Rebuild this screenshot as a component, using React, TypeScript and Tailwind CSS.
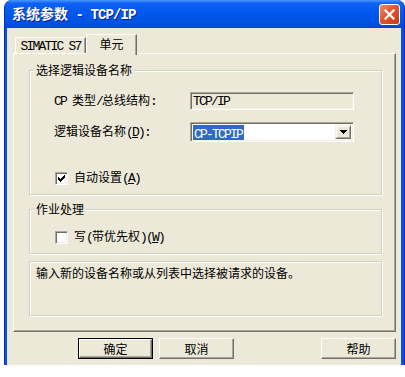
import React from "react";

const L = ({ children }: { children: React.ReactNode }) => (
  <span className="font-['Liberation_Mono'] text-[13px] tracking-[-1.8px]">{children}</span>
);
const U = ({ children }: { children: React.ReactNode }) => (
  <span className="font-['Liberation_Mono'] text-[13px] tracking-[-1.8px] underline">{children}</span>
);

function Etched({
  className = "",
  label,
  children,
}: {
  className?: string;
  label?: string;
  children?: React.ReactNode;
}) {
  return (
    <div
      className={`relative border border-[#D0D0BF] shadow-[1px_1px_0_#FFFFFF,inset_1px_1px_0_#FFFFFF] ${className}`}
    >
      {label && (
        <span className="absolute left-[4px] top-[-8px] bg-[#ECE9D8] px-[2px] leading-[14px]">
          {label}
        </span>
      )}
      {children}
    </div>
  );
}

function Check({ checked }: { checked?: boolean }) {
  return (
    <div className="w-[13px] h-[13px] shrink-0 bg-white border border-t-[#ACA899] border-l-[#ACA899] border-r-white border-b-white shadow-[inset_1px_1px_0_#716F64,inset_-1px_-1px_0_#F1EFE2] flex items-center justify-center">
      {checked && (
        <svg width="7" height="7" viewBox="0 0 7 7" shapeRendering="crispEdges">
          <polygon points="0,2 2,4 7,-1 7,2 2,7 0,5" fill="#000" />
        </svg>
      )}
    </div>
  );
}

function Btn({ children, def }: { children: React.ReactNode; def?: boolean }) {
  const inner =
    "w-full h-full flex items-center justify-center border border-t-white border-l-white border-r-[#716F64] border-b-[#716F64] shadow-[inset_-1px_-1px_0_#ACA899]";
  return (
    <div className={`w-[75px] h-[21px] shrink-0 ${def ? "border border-black" : ""}`}>
      <div className={inner}>
        <span className="leading-[14px] text-[12px]">{children}</span>
      </div>
    </div>
  );
}

const sunken =
  "border border-t-[#ACA899] border-l-[#ACA899] border-r-white border-b-white shadow-[inset_1px_1px_0_#716F64,inset_-1px_-1px_0_#F1EFE2]";

export default function App() {
  return (
    <div className="w-[405px] h-[377px] bg-white font-['Noto_Sans_CJK_SC',sans-serif] text-[12px] text-black">
      <div className="ml-[4px] w-[401px] h-[365px] flex flex-col rounded-t-[8px] overflow-hidden bg-[#0A4FE0] border-l border-r border-[#0831B5]">
        {/* Title bar */}
        <div className="h-[28px] shrink-0 flex items-center bg-[linear-gradient(to_bottom,#4A96FF_0%,#0F62F5_12%,#0058EE_45%,#0054E3_80%,#0046D2_100%)]">
          <div className="pl-[7px] flex-1 text-white font-bold text-[14px] leading-[16px] [text-shadow:1px_1px_0_#0A1E8A] whitespace-pre">
            系统参数<span className="font-['Liberation_Mono'] text-[14px] tracking-[-0.9px]"> - TCP/IP</span>
          </div>
          <div className="mr-[4px] w-[21px] h-[21px] rounded-[3px] border border-white bg-[linear-gradient(135deg,#F08A6A_0%,#E0572F_45%,#C73A17_100%)] flex items-center justify-center">
            <svg width="11" height="11" viewBox="0 0 11 11">
              <path d="M1.5 1.5 L9.5 9.5 M9.5 1.5 L1.5 9.5" stroke="#fff" strokeWidth="2.2" strokeLinecap="square" />
            </svg>
          </div>
        </div>

        {/* Body */}
        <div className="flex-1 ml-[2px] mr-[3px] bg-[#ECE9D8] flex flex-col pt-[6px]">
          {/* Tabs */}
          <div className="flex items-end h-[21px] pl-[8px] relative z-10">
            <div className="w-[71px] h-[16px] mb-[2px] border-t border-l border-white border-r border-r-[#716F64] shadow-[inset_-1px_0_0_#ACA899] rounded-tl-[2px] flex items-center justify-center">
              <span className="leading-[14px]">
                <L>SIMATIC S7</L>
              </span>
            </div>
            <div className="w-[51px] h-[21px] bg-[#ECE9D8] border-t border-l border-white border-r border-r-[#716F64] shadow-[inset_-1px_0_0_#ACA899] rounded-tl-[2px] flex justify-center pt-[2px]">
              <span className="leading-[14px] text-[12px]">单元</span>
            </div>
          </div>

          {/* Panel */}
          <div className="-mt-[2px] ml-[6px] w-[383px] h-[279px] border-t border-l border-white border-r border-b border-r-[#716F64] border-b-[#716F64] shadow-[inset_-1px_-1px_0_#ACA899] pt-[16px] pl-[15px] flex flex-col">
            <Etched label="选择逻辑设备名称" className="w-[353px] h-[125px] pt-[21px] pl-[24px]">
              <div className="flex items-center h-[18px]">
                <div className="w-[136px] leading-[14px] whitespace-pre">
                  <L>CP </L>类型<L>/</L>总线结构<L>:</L>
                </div>
                <div className={`w-[164px] h-[18px] bg-[#ECE9D8] ${sunken} flex items-center pl-[2px]`}>
                  <span className="leading-[14px]">
                    <L>TCP/IP</L>
                  </span>
                </div>
              </div>
              <div className="flex items-center h-[20px] mt-[12px]">
                <div className="w-[136px] leading-[14px] whitespace-pre">
                  逻辑设备名称<L>(</L>
                  <U>D</U>
                  <L>):</L>
                </div>
                <div className={`w-[164px] h-[20px] bg-white ${sunken} flex items-center p-[2px]`}>
                  <div className="h-full flex-1 flex items-center">
                    <span className="bg-[#316AC5] text-white h-[15px] leading-[15px] pl-[1px] pr-[2px]">
                      <L>CP-TCPIP</L>
                    </span>
                  </div>
                  <div className="w-[16px] h-full border border-t-[#F1EFE2] border-l-[#F1EFE2] border-r-[#716F64] border-b-[#716F64] shadow-[inset_1px_1px_0_#FFFFFF,inset_-1px_-1px_0_#ACA899] bg-[#ECE9D8] flex items-center justify-center">
                    <svg width="7" height="4" viewBox="0 0 7 4" shapeRendering="crispEdges">
                      <polygon points="0,0 7,0 3.5,4" fill="#000" />
                    </svg>
                  </div>
                </div>
              </div>
              <div className="flex items-center mt-[28px] ml-[1px] gap-[6px]">
                <Check checked />
                <span className="leading-[14px] whitespace-pre">
                  自动设置<L>(</L>
                  <U>A</U>
                  <L>)</L>
                </span>
              </div>
            </Etched>

            <Etched label="作业处理" className="mt-[14px] w-[353px] h-[45px] pt-[19px] pl-[25px]">
              <div className="flex items-center gap-[6px]">
                <Check />
                <span className="leading-[14px] whitespace-pre">
                  写<L>(</L>带优先权<L>)(</L>
                  <U>W</U>
                  <L>)</L>
                </span>
              </div>
            </Etched>

            <Etched className="mt-[7px] w-[353px] h-[55px] pt-[4px] pl-[6px]">
              <div className="leading-[14px]">输入新的设备名称或从列表中选择被请求的设备。</div>
            </Etched>
          </div>

          {/* Buttons */}
          <div className="flex mt-[6px] pl-[71px] pr-[5px]">
            <Btn def>确定</Btn>
            <div className="ml-[6px]">
              <Btn>取消</Btn>
            </div>
            <div className="ml-auto">
              <Btn>帮助</Btn>
            </div>
          </div>
        </div>
      </div>
    </div>
  );
}
